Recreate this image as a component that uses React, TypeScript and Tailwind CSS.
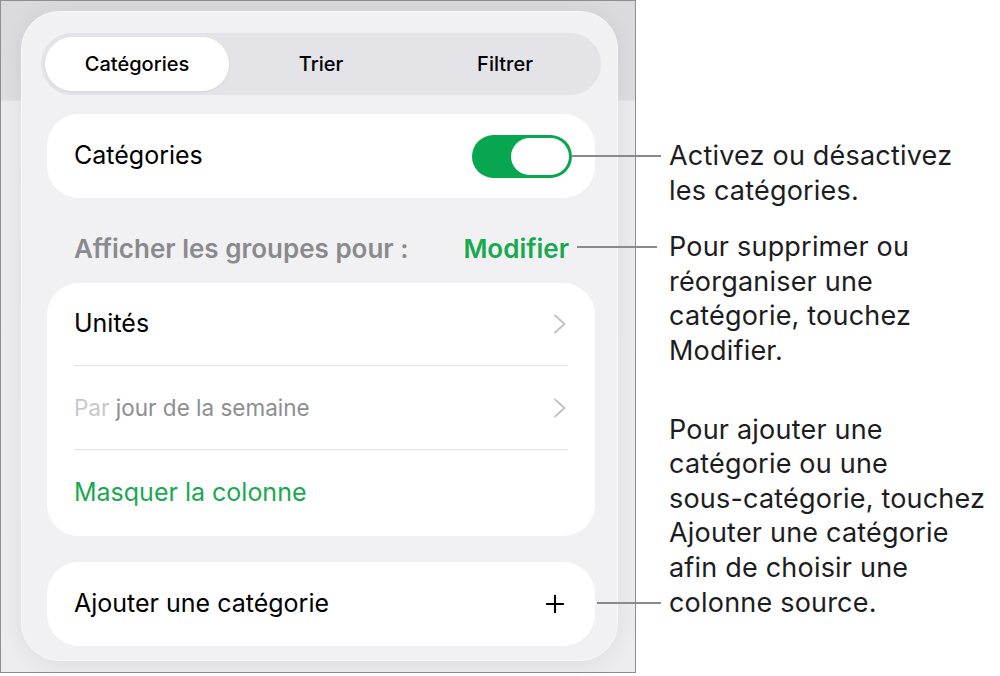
import { Plus } from "lucide-react";

const font = { fontFamily: "Inter, 'Noto Sans', sans-serif" };

const Segmented = () => (
  <div className="ml-[19px] mt-[21px] flex h-[62px] w-[560px] rounded-full bg-[#e3e3e8] p-[4px]">
    <div className="flex flex-1 items-center justify-center rounded-full bg-white text-[20px] font-medium text-black shadow-[0_1px_3px_rgba(0,0,0,0.06)]">
      Catégories
    </div>
    <div className="flex flex-1 items-center justify-center text-[20px] font-medium text-black">
      Trier
    </div>
    <div className="flex flex-1 items-center justify-center text-[20px] font-medium text-black">
      Filtrer
    </div>
  </div>
);

const Toggle = () => (
  <div className="flex h-[43px] w-[100px] items-center justify-end rounded-full bg-[#08a650] p-[3px]">
    <div className="h-[37px] w-[58px] rounded-full bg-white" />
  </div>
);

// thin iOS style disclosure chevron
const Chevron = () => (
  <svg width="14" height="20" viewBox="0 0 14 20" fill="none">
    <path d="M2 1.5 L11.5 10 L2 18.5" stroke="#c4c4c8" strokeWidth="2" strokeLinecap="round" strokeLinejoin="round" />
  </svg>
);

export default function App() {
  return (
    <div className="relative flex h-[676px] w-[1000px] bg-white" style={font}>
      <div className="h-[673px] w-[636px] border border-[#8e8e8e] bg-[linear-gradient(to_bottom,#d9d9de_0px,#dedee2_99px,#ececee_100px,#ededef_100%)]">
        <div className="ml-[20px] mt-[10px] flex h-[650px] w-[597px] flex-col rounded-[38px] border border-[#f8f8fa] bg-[#f1f1f3] shadow-[0_4px_24px_rgba(0,0,0,0.07)]">
          <Segmented />

          <div className="ml-[25px] mt-[19px] flex h-[84px] w-[548px] items-center justify-between rounded-[32px] bg-white pl-[27px] pr-[23px]">
            <span className="text-[25px] text-black">Catégories</span>
            <Toggle />
          </div>

          <div className="ml-[25px] flex h-[85px] w-[548px] items-center justify-between pl-[27px] pr-[26px] pt-[15px]">
            <span className="text-[26px] font-semibold text-[#8a8a8e]">Afficher les groupes pour :</span>
            <span className="text-[26px] font-semibold text-[#1aa851]">Modifier</span>
          </div>

          <div className="ml-[25px] flex h-[253px] w-[548px] flex-col rounded-[32px] bg-white px-[27px]">
            <div className="flex h-[83px] items-center justify-between border-b border-[#e2e2e4] pr-[1px]">
              <span className="text-[25px] text-black">Unités</span>
              <Chevron />
            </div>
            <div className="flex h-[84px] items-center justify-between border-b border-[#e2e2e4] pr-[1px]">
              <span className="text-[22.5px] text-[#8e8e92]">
                <span className="text-[#c8c8cc]">Par</span> jour de la semaine
              </span>
              <Chevron />
            </div>
            <div className="flex flex-1 items-center">
              <span className="text-[25px] text-[#1aa851]">Masquer la colonne</span>
            </div>
          </div>

          <div className="ml-[25px] mt-[26px] flex h-[84px] w-[548px] items-center justify-between rounded-[32px] bg-white pl-[27px] pr-[26px]">
            <span className="text-[25px] text-black">Ajouter une catégorie</span>
            <Plus className="h-[28px] w-[28px] text-black" strokeWidth={1.8} />
          </div>
        </div>
      </div>

      <div className="ml-[33px] flex flex-col pt-[139px] text-[27px] leading-[34.6px] tracking-[0.2px] text-[#1d1d1f]">
        <p className="whitespace-nowrap">
          Activez ou désactivez
          <br />
          les catégories.
        </p>
        <p className="mt-[22px] whitespace-nowrap">
          Pour supprimer ou
          <br />
          réorganiser une
          <br />
          catégorie, touchez
          <br />
          Modifier.
        </p>
        <p className="mt-[44px] whitespace-nowrap">
          Pour ajouter une
          <br />
          catégorie ou une
          <br />
          sous-catégorie, touchez
          <br />
          Ajouter une catégorie
          <br />
          afin de choisir une
          <br />
          colonne source.
        </p>
      </div>

      <div className="absolute left-[571px] top-[155px] h-[2px] w-[90px] bg-[#8a8a8a]" />
      <div className="absolute left-[577px] top-[246px] h-[2px] w-[80px] bg-[#8a8a8a]" />
      <div className="absolute left-[597px] top-[602px] h-[2px] w-[64px] bg-[#8a8a8a]" />
    </div>
  );
}
